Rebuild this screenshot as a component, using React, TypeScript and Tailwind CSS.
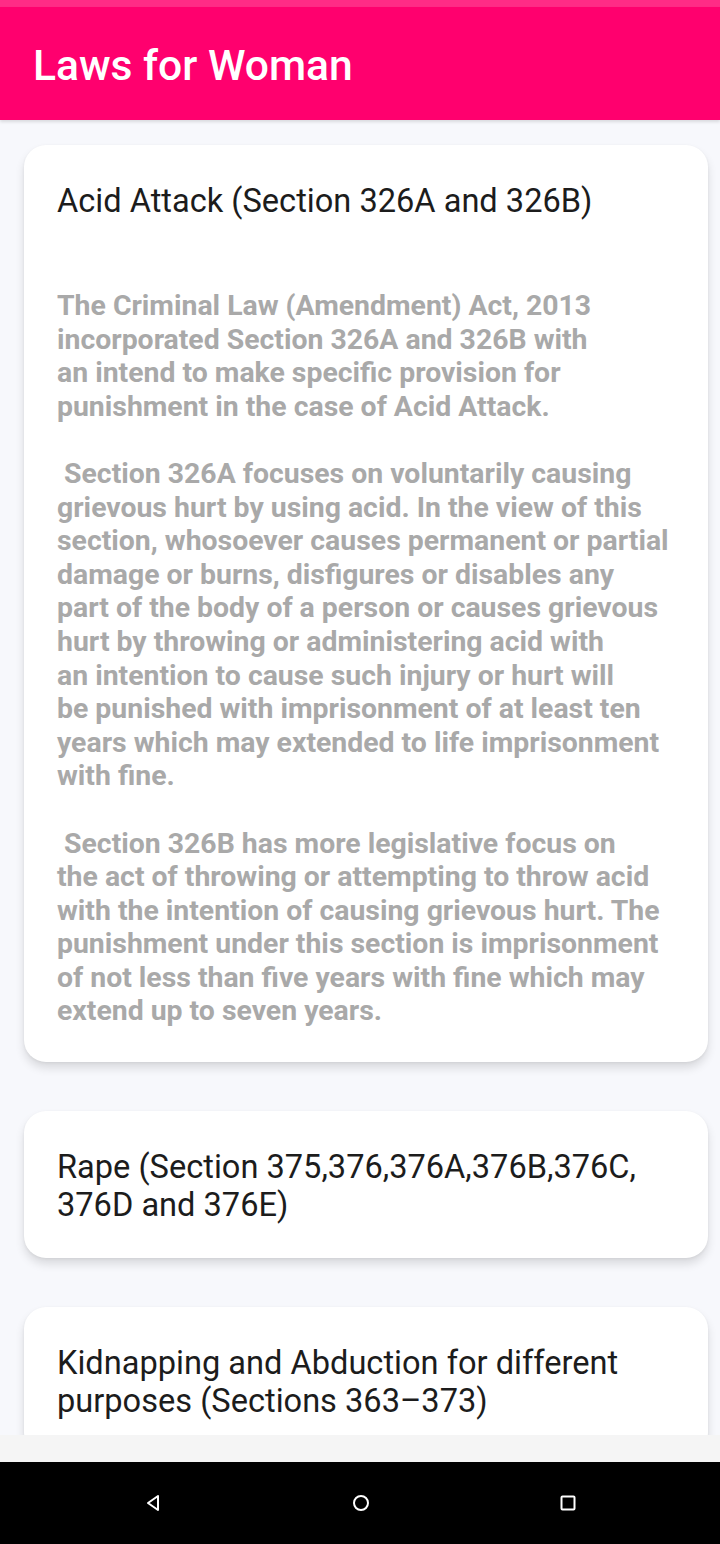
import React from 'react'

const body1 = [
  'The Criminal Law (Amendment) Act, 2013',
  'incorporated Section 326A and 326B with',
  'an intend to make specific provision for',
  'punishment in the case of Acid Attack.',
  '',
  ' Section 326A focuses on voluntarily causing',
  'grievous hurt by using acid. In the view of this',
  'section, whosoever causes permanent or partial',
  'damage or burns, disfigures or disables any',
  'part of the body of a person or causes grievous',
  'hurt by throwing or administering acid with',
  'an intention to cause such injury or hurt will',
  'be punished with imprisonment of at least ten',
  'years which may extended to life imprisonment',
  'with fine.',
  '',
  ' Section 326B has more legislative focus on',
  'the act of throwing or attempting to throw acid',
  'with the intention of causing grievous hurt. The',
  'punishment under this section is imprisonment',
  'of not less than five years with fine which may',
  'extend up to seven years.',
]

function Card({ title, children }: { title: React.ReactNode; children?: React.ReactNode }) {
  return (
    <div className="w-[684px] shrink-0 rounded-[22px] bg-white pl-[33px] pr-[20px] pt-[37px] pb-[34px] shadow-[0_6px_10px_rgba(0,0,0,0.12),0_1px_3px_rgba(0,0,0,0.06)]">
      <div className="text-[32.6px] leading-[38px] text-[#1c1c1c]">{title}</div>
      {children}
    </div>
  )
}

export default function App() {
  return (
    <div className="flex h-[1544px] w-[720px] flex-col overflow-hidden bg-[#f7f8fc] font-['Roboto',sans-serif]">
      <div className="h-[7px] bg-[#ff2b86]" />
      <div className="flex h-[113px] items-center bg-[#ff006e] px-[33px] shadow-[0_2px_3px_rgba(0,0,0,0.12)]">
        <h1 className="pt-[4px] text-[42.6px] font-medium text-white">Laws for Woman</h1>
      </div>

      <div className="flex min-h-0 flex-1 flex-col gap-[49px] overflow-hidden pl-[24px] pt-[25px]">
        <Card title="Acid Attack (Section 326A and 326B)">
          <div className="mt-[69px] whitespace-pre text-[28.4px] font-bold leading-[33.6px] text-[#a9a9a9]">
            {body1.map((line, i) => (
              <div key={i} className="h-[33.6px]">{line}</div>
            ))}
          </div>
        </Card>
        <Card
          title={
            <>
              Rape (Section 375,376,376A,376B,376C,
              <br />
              376D and 376E)
            </>
          }
        />
        <Card
          title={
            <>
              Kidnapping and Abduction for different
              <br />
              purposes (Sections 363–373)
            </>
          }
        />
      </div>

      <div className="h-[27px] bg-[#f5f5f5]" />
      <div className="flex h-[82px] items-center justify-between bg-black pl-[143px] pr-[143px]">
        <svg width="20" height="20" viewBox="0 0 20 20" fill="none" stroke="white" strokeWidth="2">
          <path d="M15 3 L5 10 L15 17 Z" strokeLinejoin="round" />
        </svg>
        <svg width="18" height="18" viewBox="0 0 18 18" fill="none" stroke="white" strokeWidth="2">
          <circle cx="9" cy="9" r="7" />
        </svg>
        <svg width="18" height="18" viewBox="0 0 18 18" fill="none" stroke="white" strokeWidth="2">
          <rect x="2.5" y="2.5" width="13" height="13" rx="1" />
        </svg>
      </div>
    </div>
  )
}
